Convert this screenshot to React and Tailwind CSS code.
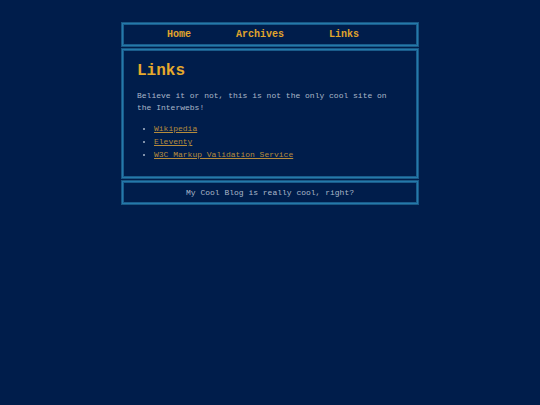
const navLinks = ["Home", "Archives", "Links"];

const links = ["Wikipedia", "Eleventy", "W3C Markup Validation Service"];

const box =
  "border border-[#195783] shadow-[inset_0_0_0_1px_#2479ab,inset_0_0_0_2px_#1a5c8b]";

const App = () => {
  return (
    <div
      className="min-h-screen bg-[#001d4b] pt-[22px]"
      style={{ fontFamily: '"Liberation Mono", "Courier New", monospace' }}
    >
      <div className="mx-auto w-[298px] flex flex-col gap-[1px]">
        {/* Nav */}
        <nav className={`${box} h-[25px] flex items-center pl-[45px] gap-[45px]`}>
          {navLinks.map((l) => (
            <a
              key={l}
              href="#"
              className="text-[10px] font-bold text-[#e0a52b] leading-none"
            >
              {l}
            </a>
          ))}
        </nav>

        {/* Main */}
        <main className={`${box} px-[15px] pt-[13px] pb-[17px]`}>
          <h1 className="text-[16px] leading-[18px] font-bold text-[#e6aa2c]">
            Links
          </h1>
          <p className="mt-[10px] text-[8px] leading-[12px] text-[#aab7c8]">
            Believe it or not, this is not the only cool site on the Interwebs!
          </p>
          <ul className="mt-[8px] pl-[17px] list-disc marker:text-[#aab7c8] text-[8px] leading-[13px]">
            {links.map((l) => (
              <li key={l} className="text-[#aab7c8]">
                <a href="#" className="text-[#b68c3c] underline">
                  {l}
                </a>
              </li>
            ))}
          </ul>
        </main>

        {/* Footer */}
        <footer className={`${box} h-[25px] flex items-center justify-center`}>
          <p className="text-[8px] text-[#aab7c8]">
            My Cool Blog is really cool, right?
          </p>
        </footer>
      </div>
    </div>
  );
};

export default App;
